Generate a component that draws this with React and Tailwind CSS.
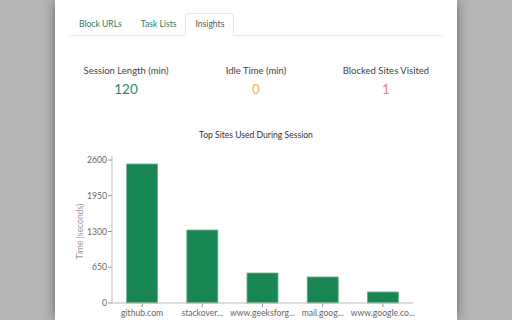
const sites = [
  { name: "github.com", value: 2527 },
  { name: "stackover...", value: 1327 },
  { name: "www.geeksforg...", value: 545 },
  { name: "mail.goog...", value: 473 },
  { name: "www.google.co...", value: 200 },
];

function Chart() {
  const x0 = 57;
  const x1 = 358;
  const yTop = 32;
  const yZero = 175;
  const band = (x1 - x0) / sites.length;
  const ticks = [0, 650, 1300, 1950, 2600];
  const yOf = (v) => yZero - (v / 2600) * (yZero - yTop);

  return (
    <svg width="402" height="190" className="block" style={{ fontFamily: "Lato, sans-serif" }}>
      <text x="201" y="4" textAnchor="middle" fontSize="8.6" fill="#333" dominantBaseline="hanging">
        Top Sites Used During Session
      </text>
      <text
        x="0"
        y="0"
        transform={`translate(28 ${(yTop + yZero) / 2}) rotate(-90)`}
        textAnchor="middle"
        fontSize="8.6"
        fill="#999"
      >
        Time (seconds)
      </text>
      {ticks.map((t) => (
        <g key={t}>
          <line x1={x0 - 4} x2={x0} y1={yOf(t)} y2={yOf(t)} stroke="#999" />
          <text x={x0 - 5} y={yOf(t) + 3} textAnchor="end" fontSize="8.6" fill="#666">
            {t}
          </text>
        </g>
      ))}
      {sites.map((s, i) => {
        const cx = x0 + band * (i + 0.5);
        return (
          <g key={s.name}>
            <rect x={cx - 15.5} y={yOf(s.value)} width="31" height={yZero - yOf(s.value)} fill="#198754" stroke="#6fae8d" strokeWidth="0.8" />
            <line x1={cx} x2={cx} y1={yZero} y2={yZero + 4} stroke="#999" />
            <text x={cx} y={yZero + 13} textAnchor="middle" fontSize="8.6" fill="#666">
              {s.name}
            </text>
          </g>
        );
      })}
      <line x1={x0} x2={x0} y1={yTop - 4} y2={yZero} stroke="#bbb" />
      <line x1={x0} x2={x1} y1={yZero} y2={yZero} stroke="#bbb" />
    </svg>
  );
}

function Stat({ label, value, color }) {
  return (
    <div className="flex w-[130px] flex-col items-center">
      <span className="text-[9.5px] leading-[14px] text-[#444]">{label}</span>
      <span className={`mt-[3px] text-[13.5px] leading-[16px] ${color}`}>{value}</span>
    </div>
  );
}

export default function App() {
  return (
    <div className="flex h-[320px] w-[512px] justify-center overflow-hidden bg-[#b7b7b7] font-['Lato',sans-serif]">
      <div className="h-full w-[402px] bg-white shadow-[0_0_12px_rgba(0,0,0,0.45)]">
        <div className="px-[14px] pt-[13px]">
          <div className="flex h-[23px] border-b border-[#e6e6e6] text-[8.6px]">
            <div className="flex items-center px-[10px] text-[#2d7a63]">Block URLs</div>
            <div className="flex items-center px-[9px] text-[#2d7a63]">Task Lists</div>
            <div className="-mb-px flex items-center rounded-t-[4px] border border-[#e6e6e6] border-b-white px-[9px] text-[#555]">
              Insights
            </div>
          </div>
        </div>
        <div className="mt-[28px] flex justify-center">
          <Stat label="Session Length (min)" value="120" color="text-[#1f8a6a]" />
          <Stat label="Idle Time (min)" value="0" color="text-[#f0b34a]" />
          <Stat label="Blocked Sites Visited" value="1" color="text-[#e8806e]" />
        </div>
        <div className="mt-[31px]">
          <Chart />
        </div>
      </div>
    </div>
  );
}
